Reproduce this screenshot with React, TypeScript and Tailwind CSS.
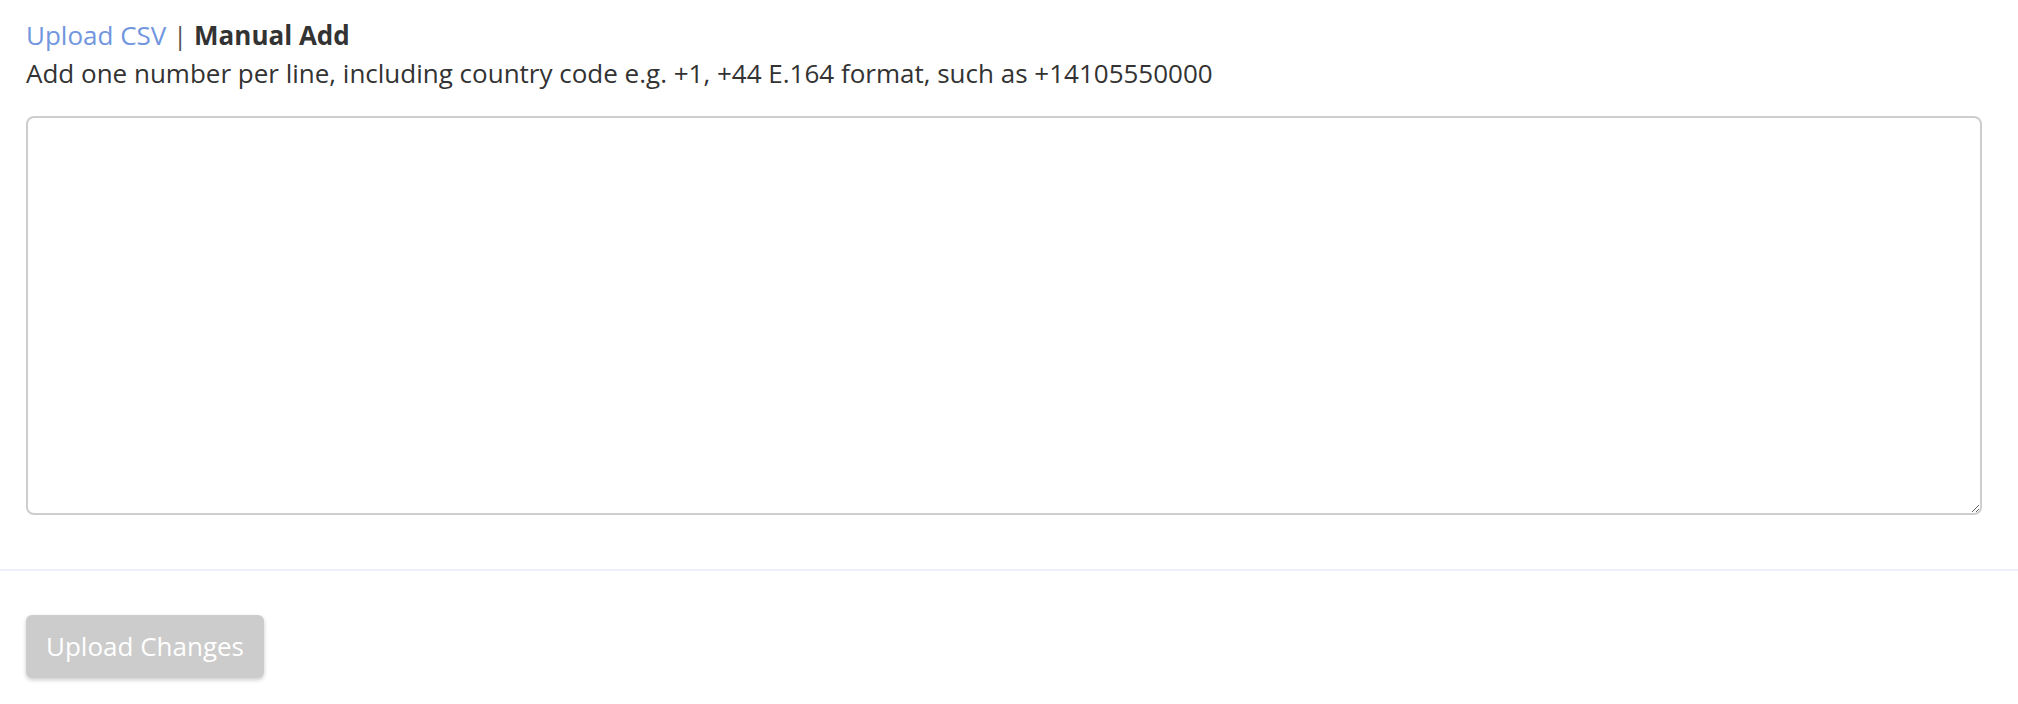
import React from "react";

export default function App() {
  return (
    <div className="w-full min-h-screen bg-white font-['Open_Sans',sans-serif] text-[#333333]">
      <div className="pl-[26px] pr-[36px] pt-[16px]">
        <div className="text-[26px] leading-[38px]">
          <span className="text-[#7196de] cursor-pointer">Upload CSV</span>
          <span className="text-[#555555]"> | </span>
          <span className="font-bold text-[#333333]">Manual Add</span>
        </div>
        <p className="text-[26px] leading-[38px]">
          Add one number per line, including country code e.g. +1, +44 E.164 format, such as +14105550000
        </p>
        <textarea className="block mt-[24px] w-full h-[399px] rounded-[8px] border-2 border-[#cecece] bg-white p-3 text-[24px] outline-none" />
      </div>
      <div className="mt-[54px] border-t-2 border-[#eef0fb]" />
      <div className="px-[26px] pt-[44px]">
        <button
          disabled
          className="h-[63px] px-[20px] rounded-[6px] bg-[#cccccc] text-white text-[26px] shadow-[0_2px_4px_rgba(0,0,0,0.2)]"
        >
          Upload Changes
        </button>
      </div>
    </div>
  );
}
